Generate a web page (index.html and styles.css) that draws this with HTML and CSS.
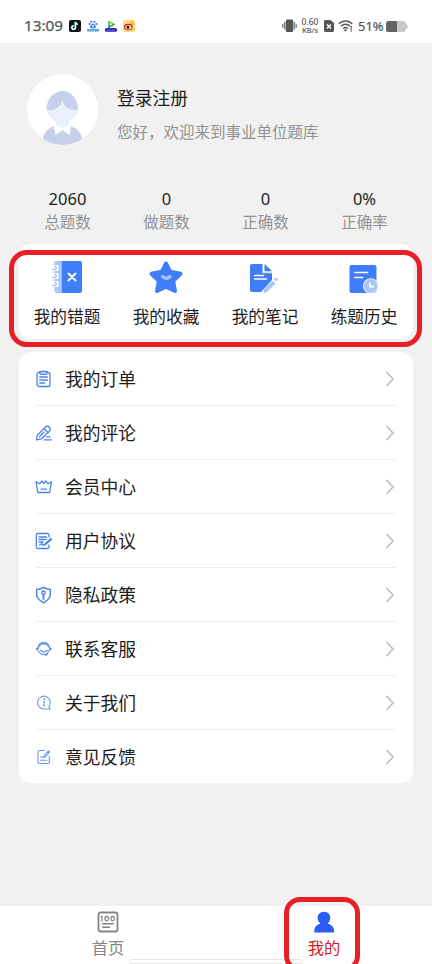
FILE: index.html
```html
<!DOCTYPE html>
<html lang="zh-CN">
<head>
<meta charset="utf-8">
<title>我的</title>
<link rel="stylesheet" href="styles.css">
</head>
<body>
<div class="screen">
  <header class="status">
    <span class="time">13:09</span>
    <div class="apps">
      <svg width="12" height="12" viewBox="0 0 12 12"><rect width="12" height="12" rx="2" fill="#111"/><path d="M6.600 2v5.600A1.800 1.800 0 1 1 4.900 5.900M6.600 2.200c.3 1.500 1.200 2.100 2.400 2.200" fill="none" stroke="#45e2dd" stroke-width="1.500" transform="translate(-.5 -.3)"/><path d="M6.600 2v5.600A1.800 1.800 0 1 1 4.900 5.900M6.600 2.200c.3 1.500 1.200 2.100 2.400 2.200" fill="none" stroke="#fff" stroke-width="1.300"/></svg>
      <svg width="12" height="12" viewBox="0 0 12 12"><g fill="#4380ec"><circle cx="4.400" cy="1.800" r="1.100"/><circle cx="7.500" cy="1.800" r="1.100"/><circle cx="2.500" cy="4" r="1.100"/><circle cx="9.500" cy="4" r="1.100"/><path d="M6 3.500C4.500 3.500 3 6 3 7s1 1.500 3 1.300c2 .2 3-.3 3-1.300S7.500 3.500 6 3.500z"/></g><circle cx="6" cy="6" r="1" fill="#fff"/><rect y="9" width="12" height="2.600" rx="1" fill="#459be0"/><path d="M2 10.300h8" stroke="#b7e3fa" stroke-width=".8" stroke-dasharray="1 .7"/></svg>
      <svg width="12" height="12" viewBox="0 0 12 12"><path d="M3 1v7.500l3-1.800z" fill="#2ba8f0"/><path d="M3 .6 10.200 4 7 6.500 3 4z" fill="#69c82c"/><path d="M3 8.500 10.200 4 6 4.600z" fill="#178b57"/><path d="m5 3 2.500 1.300L5 5.700z" fill="#fff"/><rect y="8" width="12" height="3.800" rx="1.500" fill="#2821b8"/><path d="M2 10h8" stroke="#a9b8ff" stroke-width=".8" stroke-dasharray="1 .7"/></svg>
      <svg width="12" height="12" viewBox="0 0 12 12"><rect width="12" height="12" rx="2" fill="#ffd875"/><ellipse cx="5.300" cy="7" rx="4.300" ry="3.200" fill="#d32421"/><ellipse cx="5.300" cy="7.200" rx="3" ry="2" fill="#fff"/><circle cx="5" cy="7.300" r="1.500" fill="#171010"/><path d="M7.200 3.300c1.700-.4 2.500.5 2.200 2M7.500 1.400c2.400-.4 4 1.200 3.600 3.500" fill="none" stroke="#f39a2c" stroke-width=".9"/></svg>
    </div>
    <div class="system">
      <svg class="vibrate" width="15" height="14" viewBox="0 0 15 14"><rect x="3.800" y=".5" width="7.400" height="12.500" rx="1.500" fill="#555"/><path d="M2.700 3v7.500M12.300 3v7.500M.8 4.800v4M14.200 4.800v4" stroke="#777" stroke-width="1.300"/></svg>
      <div class="speed"><span>0.60</span><span class="unit">KB/s</span></div>
      <svg class="sim" width="10" height="12" viewBox="0 0 10 12"><path d="M1.500 0h5L10 3v7.500A1.500 1.500 0 0 1 8.500 12h-7A1.500 1.500 0 0 1 0 10.500v-9A1.500 1.500 0 0 1 1.500 0z" fill="#555"/><path d="m3 4.500 4 4m0-4-4 4" stroke="#fff" stroke-width="1.400"/></svg>
      <svg class="wifi" width="16" height="12" viewBox="0 0 16 12"><path d="M.7 3.800c4-3.600 9.600-3.600 13.600 0M3 6.200c2.800-2.400 6.200-2.400 9 0M5.200 8.500c1.500-1.200 3.200-1.200 4.700 0" fill="none" stroke="#555" stroke-width="1.500"/><path d="m5.800 9.800 1.700 2 1.700-2q-1.700-1-3.400 0z" fill="#555"/><path d="M13.300 6v5.600" stroke="#555" stroke-width="1.500" stroke-dasharray="1.500 .6"/></svg>
      <span class="percent">51%</span>
      <svg class="battery" width="22" height="11" viewBox="0 0 22 11"><path d="M2.500 0h15a2.500 2.500 0 0 1 2.300 2.500L21.500 4v3l-1.700 1.500A2.500 2.500 0 0 1 17.500 11h-15A2.500 2.500 0 0 1 0 8.500v-6A2.500 2.500 0 0 1 2.500 0z" fill="#cacaca"/><path d="M2.500 0H11v11H2.500A2.500 2.500 0 0 1 0 8.500v-6A2.500 2.500 0 0 1 2.500 0z" fill="#646464"/></svg>
    </div>
  </header>

  <main>
    <section class="profile">
      <svg class="avatar" width="71" height="71" viewBox="0 0 71 71"><defs><clipPath id="disc"><circle cx="35.500" cy="35.500" r="35.500"/></clipPath></defs><circle cx="35.500" cy="35.500" r="35.500" fill="#fff"/><g clip-path="url(#disc)"><circle cx="35.300" cy="33" r="15.700" fill="#e9effc"/><path d="M19.600 36a15.700 19 0 0 1 31.400 0C43 36.500 36.500 33 35.300 26 34 33 28 36.500 19.600 36z" fill="#c6d0ea"/><path d="M15 68c1-8 5-14 13-16h15c8 2 12 8 13 16v4H15z" fill="#c6d0ea"/><path d="M29 46h13v6l-6.500 4-6.500-4z" fill="#e9effc"/><path d="m29 50.500 6.500 4.500 6.500-4.500 2 1-1.300 9.500-7.200-5-6.800 5-2-9z" fill="#fff"/></g></svg>
      <div><h1>登录注册</h1><p>您好，欢迎来到事业单位题库</p></div>
    </section>

    <section class="stats">
      <div><b>2060</b><span>总题数</span></div>
      <div><b>0</b><span>做题数</span></div>
      <div><b>0</b><span>正确数</span></div>
      <div><b>0%</b><span>正确率</span></div>
    </section>

    <section class="quick">
      <div><svg width="34" height="34" viewBox="0 0 34 34"><path d="M4.500 1H11v32H7a2.500 2.500 0 0 1-2.500-2.500z" fill="#a9c5fb"/><g fill="none"><path d="M2 9h4.500V5M2 17h4.500v-4M2 25h4.500v-4" stroke="#fff" stroke-width="4"/><path d="M5.500 6.300q2 2.700-.8 3.200H3M5.500 14.300q2 2.700-.8 3.200H3M5.500 22.300q2 2.700-.8 3.200H3" stroke="#a9c5fb" stroke-width="1.600" stroke-linecap="round"/></g><path d="M11.500 1H30a2 2 0 0 1 2 2v28a2 2 0 0 1-2 2H11.500z" fill="#407df8"/><path d="m18.500 13.500 7 7m0-7-7 7" stroke="#fff" stroke-width="2" stroke-linecap="round"/></svg><span>我的错题</span></div>
      <div><svg width="34" height="34" viewBox="0 0 34 34"><path d="m17 3.500 4.300 8.300 10.200 2-7.400 7.200L26 31l-9-4.200L8 31l1.900-10-7.400-7.200 10.200-2z" fill="#407df8" stroke="#407df8" stroke-width="4" stroke-linejoin="round"/><path d="M13.700 16.500q3.500 3.800 7.300 0" fill="none" stroke="#a9c5fb" stroke-width="3.300" stroke-linecap="round"/></svg><span>我的收藏</span></div>
      <div><svg width="34" height="34" viewBox="0 0 34 34"><path d="M4 4h11v9h9v7L13 32H4a2 2 0 0 1-2-2V6a2 2 0 0 1 2-2z" fill="#407df8"/><path d="m16.500 4 7.500 7.200h-7.500z" fill="#407df8"/><path d="M14.500 4v9H24" fill="none" stroke="#a9c5fb" stroke-width=".8"/><path d="M6.500 15.500h9M6.500 19h12" stroke="#fff" stroke-width="1.400" stroke-linecap="round"/><path d="m26 19.500 2-1.800q2-.3 2 1.800l-2 2z" fill="#a9c5fb"/><path d="m24.800 20.800 3 2.800-9.300 8.700-3 .7.700-4z" fill="#a9c5fb"/></svg><span>我的笔记</span></div>
      <div><svg width="34" height="34" viewBox="0 0 34 34"><rect x="2.500" y="5" width="27" height="28" rx="2" fill="#407df8"/><path d="M8 12.500h12.500M8 17.500h7.500" stroke="#fff" stroke-width="1.700" stroke-linecap="round"/><circle cx="23.800" cy="26" r="7.800" fill="#fff"/><circle cx="23.800" cy="26" r="6.900" fill="#a9c5fb"/><path d="M23.100 22.400v4.300h4" fill="none" stroke="#fff" stroke-width="1.700"/></svg><span>练题历史</span></div>
    </section>

    <ul class="menu">
      <li><svg class="ico" viewBox="0 0 18 18"><rect x="2" y="2.500" width="13" height="14" rx="2"/><path d="M5 2.500v-1h7v1.800q0 1-1 1H6q-1 0-1-1z" fill="#dce7fd"/><path d="M4.700 7h7.600M4.700 10h7.600M4.700 13h5"/></svg><span>我的订单</span><svg class="arrow" viewBox="0 0 10 18"><path d="m1.500 2 6.500 7-6.500 7"/></svg></li>
      <li><svg class="ico" viewBox="0 0 18 18"><path d="m2.200 11.200 8-8q2.500-2 4.300.2 1.500 2-.4 4l-7.600 7.400-5 1zM9 4.500l4.300 4.300M4.500 12.500l4.500-4.500M9 15.800h7.300M11.500 12.800H15"/></svg><span>我的评论</span><svg class="arrow" viewBox="0 0 10 18"><path d="m1.500 2 6.500 7-6.500 7"/></svg></li>
      <li><svg class="ico" viewBox="0 0 18 18"><path d="M1 3.700l3.500 2L7 3l1.700 2.500L10.500 3 13 5.700l3.500-2-1.800 10.800H2.800zM6 11.200h5.500"/></svg><span>会员中心</span><svg class="arrow" viewBox="0 0 10 18"><path d="m1.500 2 6.500 7-6.500 7"/></svg></li>
      <li><svg class="ico" viewBox="0 0 18 18"><path d="M14 5V3q0-1.500-1.500-1.500h-10Q1.300 1.500 1.300 3v12q0 1.500 1.500 1.500h9.700q1.500 0 1.500-1.500v-2M4 5h7.500M4 7.500h7M4 10h4M4.500 13l2.500-1.500.5 1.500h2"/><path d="m10.500 12 5.500-4.800" stroke-width="2.300"/></svg><span>用户协议</span><svg class="arrow" viewBox="0 0 10 18"><path d="m1.500 2 6.500 7-6.500 7"/></svg></li>
      <li><svg class="ico" viewBox="0 0 18 18"><path d="M8.500 1.300Q11 3 15.300 3.500v5.300c0 4-3.300 6-6.800 8-3.500-2-6.800-4-6.800-8V3.500Q6 3 8.500 1.300z" stroke-width="1.500"/><circle cx="8.500" cy="6.800" r="1.800"/><path d="M8.500 8.500v4.500" stroke-width="1.900"/></svg><span>隐私政策</span><svg class="arrow" viewBox="0 0 10 18"><path d="m1.500 2 6.500 7-6.500 7"/></svg></li>
      <li><svg class="ico" viewBox="0 0 18 18"><path d="M3 8c.2-7.500 11.300-7.500 11.500 0M4 6.500C5.500 2.800 12 2.800 13.500 6.500M3.800 11.500c3 4.300 7.300 4.500 10.200-.8M5.500 10.300q3.200 3 6.600 0M11 15.300l1.500-1" stroke="#6c97e8"/><path d="M3.300 6.800v4.400L.5 9zM14.300 6.800v4.400L17.100 9z" fill="#5b88dc" stroke="none"/></svg><span>联系客服</span><svg class="arrow" viewBox="0 0 10 18"><path d="m1.500 2 6.500 7-6.500 7"/></svg></li>
      <li><svg class="ico light" viewBox="0 0 18 18"><path d="M15.300 15H9a6.400 6.400 0 1 1 4.800-2.200zM8.300 7.500h1.200l-1 4.300h1"/><circle cx="9.500" cy="5.300" r=".5"/></svg><span>关于我们</span><svg class="arrow" viewBox="0 0 10 18"><path d="m1.500 2 6.500 7-6.500 7"/></svg></li>
      <li><svg class="ico light" viewBox="0 0 18 18"><path d="M9.500 2.500h-5Q3 2.500 3 4v10q0 1.500 1.500 1.500h8.300q1.500 0 1.500-1.500V8M5.500 9h3M5.500 12.300h6.300M9 9.500l.5-2.200 3.700-4.500 1.300 1-3.700 4.700zM12.200 4l1.200 1"/></svg><span>意见反馈</span><svg class="arrow" viewBox="0 0 10 18"><path d="m1.500 2 6.500 7-6.500 7"/></svg></li>
    </ul>
  </main>

  <nav class="tabs">
    <div class="tab"><svg width="22" height="22" viewBox="0 0 22 22"><rect x="1.500" y="1.500" width="19" height="19" rx="2" fill="none" stroke="#858585" stroke-width="1.800"/><path d="M5 5v5.500M3.800 6 5 5" stroke="#858585" stroke-width="1.300"/><rect x="8" y="5.500" width="3.300" height="4.300" rx="1.500" fill="none" stroke="#858585" stroke-width="1.300"/><rect x="14" y="5.500" width="3.300" height="4.300" rx="1.500" fill="none" stroke="#858585" stroke-width="1.300"/><path d="M5 12.800h12M5 16.200h8" stroke="#858585" stroke-width="1.500"/></svg><span>首页</span></div>
    <div class="tab active"><svg width="22" height="22" viewBox="0 0 22 22"><path d="M11 .7c4 0 6.300 2.800 6.300 6.200 0 2.300-1 4-2.600 5.500 4 1.600 6.300 3.600 6.300 7v2H1.300v-2c0-3.400 2.200-5.400 6-7C5.700 11 4.700 9.200 4.700 6.900 4.700 3.500 7 .7 11 .7z" fill="#2b5cf5"/></svg><span>我的</span></div>
    <div class="handle"></div>
  </nav>
  <div class="mark mark-quick"></div>
  <div class="mark mark-tab"></div>
</div>
</body>
</html>
```
FILE: styles.css
```css
* { box-sizing: border-box; }
body { margin: 0; font-family: "Noto Sans", "Noto Sans CJK SC", sans-serif; color: #1c1c1c; }
svg { display: block; flex: none; }
.screen { position: relative; width: 432px; height: 964px; overflow: hidden; background: #f1f1f1; display: flex; flex-direction: column; }

.status { height: 43px; flex: none; background: #fff; display: flex; align-items: center; padding: 9px 24px 0; color: #555; }
.time { width: 45px; font-size: 15.3px; font-weight: 400; line-height: 20px; margin-top: -2px; -webkit-text-stroke: .25px #555; }
.apps { display: flex; gap: 6px; }
.system { margin-left: auto; display: flex; align-items: center; }
.speed { width: 20px; margin: -1px 4px 0 3px; display: flex; flex-direction: column; font-size: 8.5px; line-height: 8px; font-weight: 500; text-align: center; white-space: nowrap; }
.unit { font-size: 7.5px; }
.wifi { margin-left: 4px; }
.percent { width: 26px; margin-left: 4px; font-size: 13px; line-height: 18px; white-space: nowrap; -webkit-text-stroke: .2px #555; }
.battery { margin-left: 2px; margin-right: 0; }

main { flex: 1; padding: 31px 19px 0; }
.profile { display: flex; height: 71px; padding-left: 8px; gap: 19px; }
h1 { margin: 11px 0 0; font-size: 17.8px; line-height: 26px; font-weight: 400; }
.profile p { margin: 10px 0 0; font-size: 15.5px; line-height: 22px; color: #929292; white-space: nowrap; }

.stats { display: grid; grid-template-columns: repeat(4, 99px); margin: 43px -1px 0; height: 56px; text-align: center; }
.stats div { display: flex; flex-direction: column; }
.stats b { font-size: 16.5px; line-height: 22px; font-weight: 400; }
.stats span { font-size: 15.5px; line-height: 24px; color: #929292; }

.quick { height: 95px; border-radius: 12px; background: #fff; padding-top: 16px; display: grid; grid-template-columns: repeat(4, 99px); margin-left: -1px; margin-right: 0; border-left: 1px solid #f1f1f1; justify-content: center; }
.quick div { display: flex; flex-direction: column; align-items: center; margin-left: -1px; }
.quick span { margin-top: 11px; font-size: 16.7px; line-height: 24px; }

.menu { list-style: none; margin: 13px 0 0; padding: 0 17px; height: 431px; border-radius: 12px; background: #fff; }
.menu li { height: 54px; display: flex; align-items: center; border-bottom: 1px solid #ececec; font-size: 17.8px; }
.menu li span { margin-top: -2px; }
.menu li:last-child { border-bottom: 0; }
.ico { width: 18px; height: 18px; margin-left: -1px; margin-right: 12px; fill: none; stroke: #4c82ed; stroke-width: 1.3; stroke-linecap: round; stroke-linejoin: round; }
.light { stroke: #6c97e8; stroke-width: 1.1; }
.arrow { width: 10px; height: 18px; margin-left: auto; margin-right: 1px; fill: none; stroke: #bcbcbc; stroke-width: 1.5; }

.tabs { position: relative; height: 58px; flex: none; background: #fff; display: grid; grid-template-columns: 1fr 1fr; }
.tab { display: flex; flex-direction: column; align-items: center; padding-top: 5px; font-size: 16.3px; line-height: 24px; color: #858585; }
.tab span { margin-top: 3px; }
.active { color: #d5201f; }
.handle { position: absolute; left: 129px; bottom: 0; width: 174px; height: 5px; border: 1px solid #e6e6e6; border-radius: 2px; background: #fff; }

.mark { position: absolute; border: 5px solid #e71f27; }
.mark-quick { left: 9px; top: 250px; width: 413px; height: 97px; border-radius: 18px; }
.mark-tab { left: 284px; top: 897px; width: 76px; height: 75px; border-radius: 16px; }
```
